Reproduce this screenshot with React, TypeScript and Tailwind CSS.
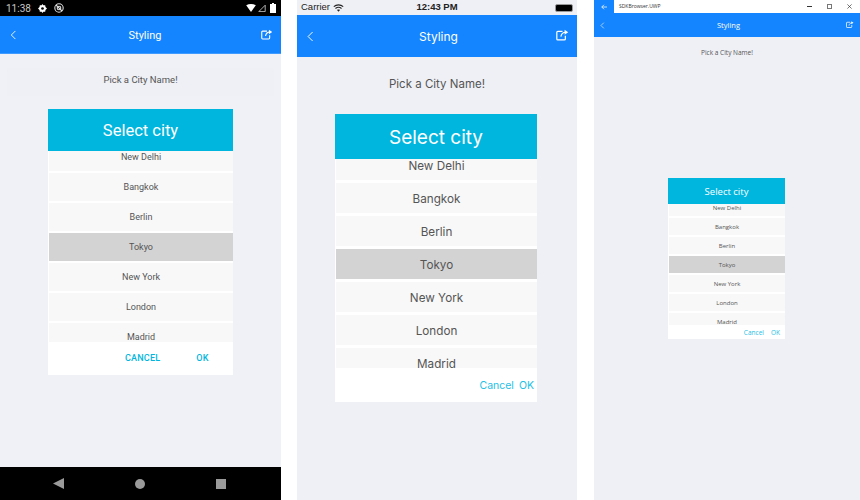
import React from "react";

const cities = ["New Delhi", "Bangkok", "Berlin", "Tokyo", "New York", "London", "Madrid"];

function Back({ className }: { className: string }) {
  return (
    <svg viewBox="0 0 10 16" fill="none" stroke="currentColor" strokeWidth="1.4" className={className}>
      <path d="M8 1.500 1.500 8 8 14.500" />
    </svg>
  );
}

function Share({ className }: { className: string }) {
  return (
    <svg viewBox="0 0 16 14" fill="none" stroke="currentColor" strokeWidth="1.5" className={className}>
      <path d="M8 2.500H2.200a1.200 1.200 0 0 0-1.200 1.200v8.100A1.200 1.200 0 0 0 2.200 13h8.100a1.200 1.200 0 0 0 1.200-1.200V8" />
      <path d="M6 9c.5-3 2.500-5.300 6-5.500" />
      <path d="M10.600.6 15 3.600 10.600 6.600Z" fill="currentColor" stroke="none" />
    </svg>
  );
}

function List({ rowClass, selectedClass, listClass, firstClass }: { rowClass: string; selectedClass: string; listClass: string; firstClass: string }) {
  return (
    <div className={`overflow-hidden bg-white ${listClass}`}>
      <div className={`flex flex-col ${firstClass}`}>
        {cities.map((c) => (
          <div key={c} className={`flex shrink-0 items-center justify-center ${rowClass} ${c === "Tokyo" ? selectedClass : "bg-[#f8f8f8]"}`}>
            {c}
          </div>
        ))}
      </div>
    </div>
  );
}

function AndroidPanel() {
  return (
    <div className="flex h-[500px] w-[281px] shrink-0 flex-col bg-[#eff1f6] font-['Roboto',sans-serif]">
      <div className="flex h-4 items-center gap-[8px] bg-black pl-[6px] pr-[5px] text-[10px] text-[#c8c8c8]">
        <span>11:38</span>
        <svg viewBox="0 0 10 10" className="-ml-[1px] h-[9px] w-[9px] text-white" fill="currentColor">
          <path d="M5 0 6 1.500h2L8.300 3.300 10 5 8.300 6.700 8 8.500H6L5 10 4 8.500H2L1.700 6.700 0 5 1.700 3.300 2 1.500H4Z" />
          <circle cx="5" cy="5" r="1.500" fill="#000" />
        </svg>
        <svg viewBox="0 0 10 10" className="-ml-[1px] h-[10px] w-[10px] text-[#dddddd]" fill="none" stroke="currentColor" strokeWidth="1.100">
          <circle cx="5" cy="5" r="4.200" />
          <circle cx="5" cy="5" r="1.800" />
          <path d="M2 2 8 8" />
        </svg>
        <div className="ml-auto flex items-center gap-[2px]">
          <svg viewBox="0 0 12 10" className="h-[8px] w-[10px] text-white" fill="currentColor"><path d="M0 1.500C3.500-.5 8.500-.5 12 1.500L6 10Z" /></svg>
          <svg viewBox="0 0 10 10" className="h-[8px] w-[8px] text-[#d8d8d8]" fill="none" stroke="currentColor"><path d="M9 1.500V9.500H1Z" /></svg>
          <svg viewBox="0 0 6 10" className="ml-[2px] h-[10px] w-[6px] text-white" fill="currentColor"><path d="M2 0h2v1h2v9H0V1h2Z" /></svg>
        </div>
      </div>
      <div className="flex h-[38px] items-center border-b border-[#3f9bff] bg-[#1485fe] pl-[10px] pr-[8px] text-white">
        <div className="w-[24px]"><Back className="h-[10px] w-[7px]" /></div>
        <span className="flex-1 pl-[7px] pt-[3px] text-center text-[11px]">Styling</span>
        <div className="flex w-[24px] justify-end"><Share className="h-[11px] w-[12px]" /></div>
      </div>
      <div className="flex flex-1 flex-col">
        <div className="mx-[7px] mt-[14px] flex h-[28px] items-center justify-center bg-[#eef0f5] pb-[3px] text-[9.500px] text-[#555555]">Pick a City Name!</div>
        <div className="mx-[48px] mt-[13px] flex flex-col bg-white">
          <div className="flex h-[42px] items-center justify-center bg-[#00b6de] pt-[2px] text-[16.500px] text-white">Select city</div>
          <List listClass="h-[191px] pl-[1px]" firstClass="-mt-[8px] gap-[2px]" rowClass="h-[28px] pt-[1px] text-[9px] text-[#555555]" selectedClass="bg-[#d3d3d3]" />
          <div className="flex h-[33px] items-center text-[9px] font-medium tracking-[0.2px] text-[#00b6de]">
            <span className="ml-[77px]">CANCEL</span>
            <span className="ml-[36px]">OK</span>
          </div>
        </div>
      </div>
      <div className="flex h-[33px] items-center bg-black pl-[53px]">
        <svg viewBox="0 0 10 10" className="h-[11px] w-[11px] text-[#9a9a9a]" fill="currentColor"><path d="M10 0V10L0 5Z" /></svg>
        <div className="ml-[71px] h-[10px] w-[10px] rounded-full bg-[#9a9a9a]" />
        <div className="ml-[71px] h-[10px] w-[10px] bg-[#9a9a9a]" />
      </div>
    </div>
  );
}

function IosPanel() {
  return (
    <div className="flex h-[500px] w-[280px] shrink-0 flex-col bg-[#eff0f5] font-['Inter',sans-serif]">
      <div className="flex h-[15px] items-center justify-between pl-[4px] pr-[4px] text-[9.500px] text-[#222222]">
        <div className="flex w-[60px] items-center gap-[3px] font-['Liberation_Sans',sans-serif]">
          <span>Carrier</span>
          <svg viewBox="0 0 12 9" className="h-[8px] w-[11px]" fill="none" stroke="currentColor" strokeWidth="1.300">
            <path d="M.7 3C3.700.4 8.300.4 11.300 3" />
            <path d="M2.600 5C4.600 3.400 7.400 3.400 9.400 5" />
            <path d="M6 8.800 4.300 6.700C5.300 6 6.700 6 7.700 6.700Z" fill="currentColor" stroke="none" />
          </svg>
        </div>
        <span className="font-['Liberation_Sans',sans-serif] text-[9.500px] font-bold">12:43 PM</span>
        <div className="flex w-[60px] justify-end">
          <div className="h-[8px] w-[18px] rounded-[2px] border border-[#999999] bg-black" />
        </div>
      </div>
      <div className="flex h-[42px] items-center bg-[#1485fe] pl-[10px] pr-[8px] text-white">
        <div className="w-[24px]"><Back className="h-[11px] w-[7px]" /></div>
        <span className="flex-1 pl-[4px] pt-[1px] text-center text-[12px]">Styling</span>
        <div className="flex w-[27px] justify-end"><Share className="mb-[2px] h-[12px] w-[13px]" /></div>
      </div>
      <div className="flex flex-1 flex-col">
        <div className="mt-[19px] flex h-[15px] items-center justify-center pt-[2px] text-[11.500px] text-[#555555]">Pick a City Name!</div>
        <div className="ml-[38px] mt-[23px] flex w-[202px] flex-col bg-white">
          <div className="flex h-[45px] items-center justify-center bg-[#00b6de] pt-[3px] text-[19px] text-white">Select city</div>
          <List listClass="h-[209px] pl-[1px]" firstClass="-mt-[9px] gap-[3px]" rowClass="h-[30px] pt-[3px] text-[11.700px] text-[#555555]" selectedClass="bg-[#d3d3d3]" />
          <div className="flex h-[34px] items-center justify-end gap-[5px] pr-[3px] pt-[1px] text-[10.500px] text-[#1fc0e6]">
            <span>Cancel</span>
            <span>OK</span>
          </div>
        </div>
      </div>
    </div>
  );
}

function UwpPanel() {
  return (
    <div className="flex h-[500px] w-[266px] shrink-0 flex-col bg-[#eff0f5] font-['Open_Sans',sans-serif]">
      <div className="flex h-[13px] items-center bg-white text-[#333333]">
        <div className="flex h-full w-[20px] items-center justify-center bg-[#1485fe] text-white">
          <svg viewBox="0 0 8 8" className="h-[6px] w-[6px]" fill="none" stroke="currentColor"><path d="M4 1 1 4l3 3M1 4h7" /></svg>
        </div>
        <span className="ml-[5px] text-[5px]">SDKBrowser.UWP</span>
        <div className="ml-auto flex items-center gap-[15px] pr-[8px]">
          <div className="h-[1px] w-[5px] bg-[#333333]" />
          <div className="h-[5px] w-[5px] border border-[#777777]" />
          <svg viewBox="0 0 6 6" className="h-[5px] w-[5px]" fill="none" stroke="currentColor" strokeWidth="0.800"><path d="M.5.5l5 5M5.500.5l-5 5" /></svg>
        </div>
      </div>
      <div className="flex h-[24px] items-center bg-[#1485fe] pl-[6px] pr-[6px] text-white">
        <div className="w-[16px]"><Back className="h-[7px] w-[5px]" /></div>
        <span className="flex-1 pl-[3px] pt-[2px] text-center text-[7.500px]">Styling</span>
        <div className="flex w-[16px] justify-end"><Share className="mb-[1px] h-[7px] w-[8px]" /></div>
      </div>
      <div className="flex flex-1 flex-col">
        <div className="mt-[11px] flex h-[9px] items-center justify-center pt-[1px] text-[6.500px] text-[#555555]">Pick a City Name!</div>
        <div className="ml-[74px] mt-[121px] flex w-[117px] flex-col bg-white">
          <div className="flex h-[26px] items-center justify-center bg-[#00b6de] pt-[3px] text-[9.500px] text-white">Select city</div>
          <List listClass="h-[121px] pl-[1px]" firstClass="-mt-[5px] gap-[2px]" rowClass="h-[17px] pt-[1px] text-[6px] text-[#555555]" selectedClass="bg-[#d3d3d3]" />
          <div className="flex h-[14px] items-center justify-end gap-[7px] pr-[5px] pt-[1px] text-[6.500px] text-[#1fc0e6]">
            <span>Cancel</span>
            <span>OK</span>
          </div>
        </div>
      </div>
    </div>
  );
}

export default function App() {
  return (
    <div className="flex h-[500px] w-[860px] overflow-hidden bg-white">
      <AndroidPanel />
      <div className="ml-[16px]"><IosPanel /></div>
      <div className="ml-[17px]"><UwpPanel /></div>
    </div>
  );
}
